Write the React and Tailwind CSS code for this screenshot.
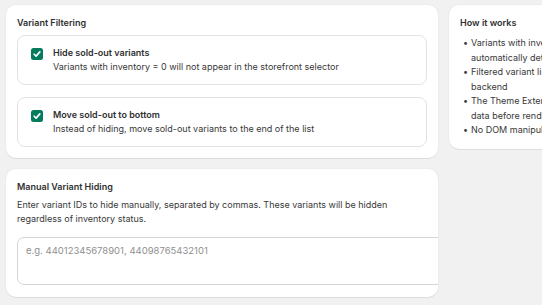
const font = { fontFamily: "Inter, 'Noto Sans', sans-serif" };

function Checkbox() {
  return (
    <div className="mt-[1.5px] flex h-[12px] w-[12px] shrink-0 items-center justify-center rounded-[2.5px] bg-[#047b5d]">
      <svg viewBox="0 0 12 12" className="h-[10px] w-[10px]" fill="none">
        <path d="M2.6 6.3 L4.9 8.5 L9.4 3.4" stroke="white" strokeWidth="2" strokeLinecap="round" strokeLinejoin="round" />
      </svg>
    </div>
  );
}

function Option({ title, description }) {
  return (
    <div className="flex gap-[10px] rounded-[8px] border border-[#e3e3e3] px-[13px] py-[10px]">
      <Checkbox />
      <div className="flex flex-col">
        <span className="font-semibold text-[#303030]">{title}</span>
        <span className="text-[#383838]">{description}</span>
      </div>
    </div>
  );
}

function Bullet({ children }) {
  return (
    <li className="flex">
      <span className="w-[11px] shrink-0 pl-[3px]">•</span>
      <span>{children}</span>
    </li>
  );
}

export default function App() {
  return (
    <div className="h-[305px] w-[542px] overflow-hidden bg-[#f1f1f1] text-[9px] leading-[14px]" style={font}>
      <div className="flex w-[800px] gap-[11px] pl-[6px] pt-[5px]">
        <div className="flex w-[432px] shrink-0 flex-col gap-[11px]">
          <div className="rounded-[10px] bg-white p-[11px] shadow-[0_1px_0_0_rgba(26,26,26,0.07),0_0_0_1px_rgba(0,0,0,0.02)]">
            <h2 className="font-semibold text-[#303030]">Variant Filtering</h2>
            <div className="mt-[5px] flex flex-col gap-[12px]">
              <Option
                title="Hide sold-out variants"
                description="Variants with inventory = 0 will not appear in the storefront selector"
              />
              <Option
                title="Move sold-out to bottom"
                description="Instead of hiding, move sold-out variants to the end of the list"
              />
            </div>
          </div>

          <div className="overflow-hidden rounded-[10px] bg-white px-[11px] pb-[12px] pt-[11px] shadow-[0_1px_0_0_rgba(26,26,26,0.07),0_0_0_1px_rgba(0,0,0,0.02)]">
            <h2 className="font-semibold text-[#303030]">Manual Variant Hiding</h2>
            <p className="mt-[4px] text-[#383838]">
              Enter variant IDs to hide manually, separated by commas. These variants will be hidden
              <br />
              regardless of inventory status.
            </p>
            <textarea
              readOnly
              placeholder="e.g. 44012345678901, 44098765432101"
              className="mt-[11px] block h-[48px] w-[440px] resize-none rounded-[7px] border border-[#d4d4d4] px-[8px] py-[6px] text-[9.5px] leading-[14px] text-[#303030] outline-none placeholder:text-[#8f8f8f]"
              style={font}
            />
          </div>
        </div>

        <div className="w-[216px] shrink-0 self-start rounded-[10px] bg-white p-[11px] shadow-[0_1px_0_0_rgba(26,26,26,0.07),0_0_0_1px_rgba(0,0,0,0.02)]">
          <h2 className="font-semibold text-[#303030]">How it works</h2>
          <ul className="mt-[6px] leading-[14.5px] text-[#383838]">
            <Bullet>
              Variants with inventory = 0 are
              <br />
              automatically detected
            </Bullet>
            <Bullet>
              Filtered variant list is sent from the
              <br />
              backend
            </Bullet>
            <Bullet>
              The Theme Extension reads variant
              <br />
              data before rendering
            </Bullet>
            <Bullet>No DOM manipulation needed</Bullet>
          </ul>
        </div>
      </div>
    </div>
  );
}
